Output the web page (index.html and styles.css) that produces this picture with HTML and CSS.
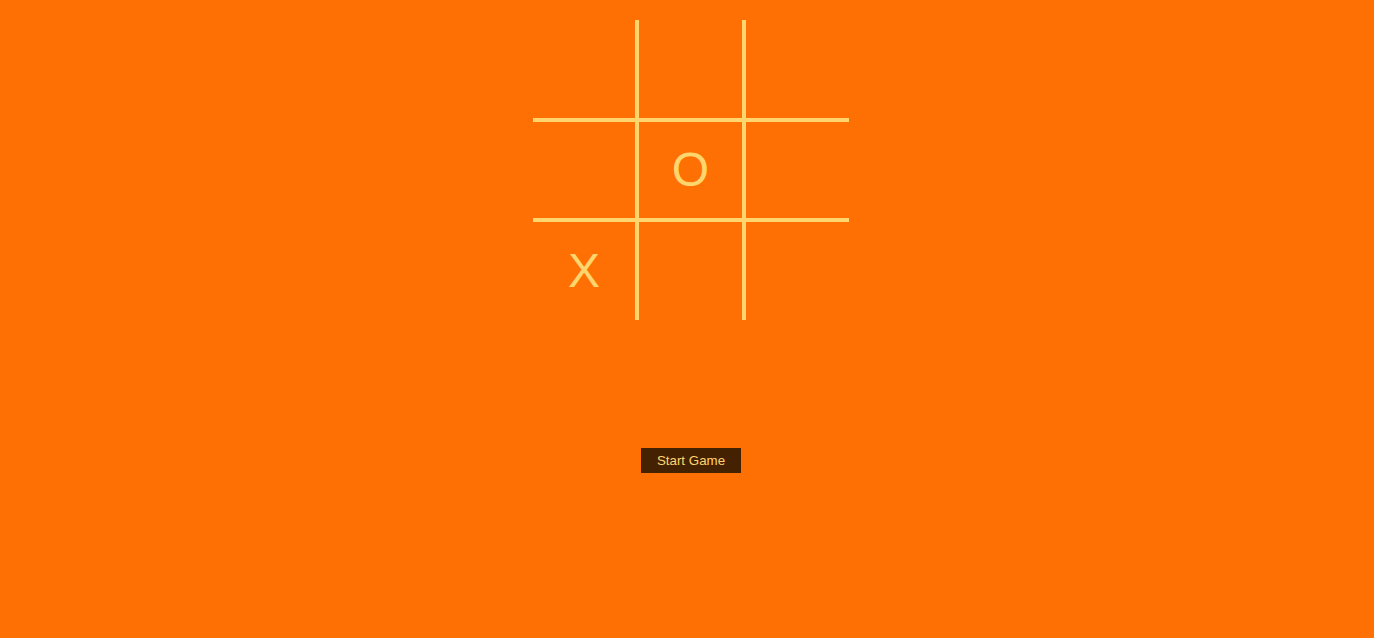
FILE: index.html
```html
<!DOCTYPE html>
<html>
<head>
<meta charset="utf-8">
<title>Tic Tac Toe</title>
<link rel="stylesheet" href="styles.css">
</head>
<body>
<main class="game">
  <div class="board">
    <div class="cell"></div>
    <div class="cell"></div>
    <div class="cell"></div>
    <div class="cell"></div>
    <div class="cell">O</div>
    <div class="cell"></div>
    <div class="cell">X</div>
    <div class="cell"></div>
    <div class="cell"></div>
  </div>
  <button class="start">Start Game</button>
</main>
</body>
</html>
```
FILE: styles.css
```css
html, body {
  margin: 0;
  height: 100%;
  background: #ff7004;
}
body {
  padding-left: 8px;
  font-family: "Liberation Sans", Arial, sans-serif;
}
.game {
  display: flex;
  flex-direction: column;
  align-items: center;
  padding-top: 20px;
}
.board {
  display: grid;
  grid-template-columns: 102px 103px 103px;
  grid-template-rows: 98px 96px 98px;
  gap: 4px;
  background: #ffd56e;
}
.cell {
  background: #ff7004;
  color: #ffd56e;
  font-size: 48px;
  display: flex;
  align-items: center;
  justify-content: center;
  line-height: 1;
}
.start {
  margin-top: 128px;
  width: 100px;
  height: 25px;
  border: 0;
  padding: 0;
  background: #442100;
  color: #ffd56e;
  font-family: "Liberation Sans", Arial, sans-serif;
  font-size: 13.333px;
}
```
